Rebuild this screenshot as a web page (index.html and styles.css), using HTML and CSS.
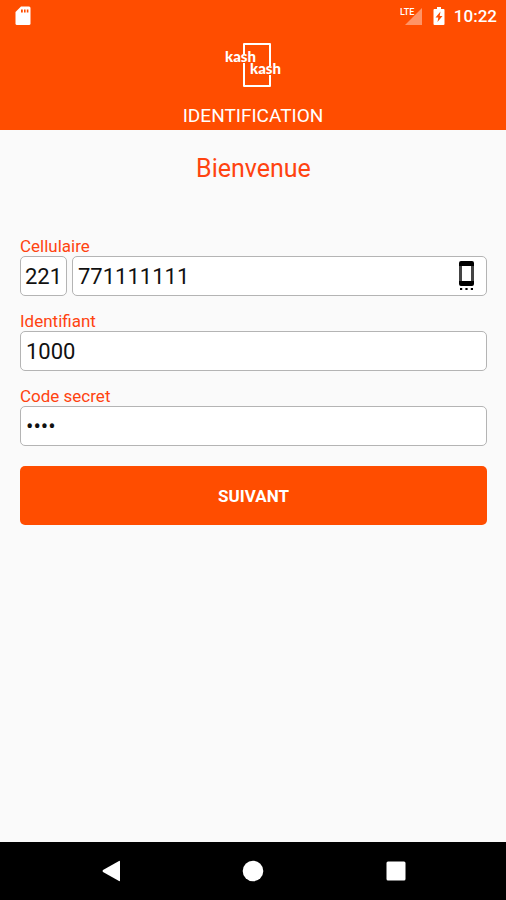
FILE: index.html
```html
<!DOCTYPE html>
<html lang="fr">
<head>
<meta charset="utf-8">
<meta name="viewport" content="width=device-width, initial-scale=1">
<title>Identification</title>
<link rel="stylesheet" href="styles.css">
</head>
<body>
<header class="header">
  <div class="status">
    <svg class="sd" width="16" height="20" viewBox="0 0 16 20" aria-hidden="true"><path class="white" d="M6 0.500H14Q15.500 0.500 15.500 2V17.500Q15.500 19 14 19H2Q0.500 19 0.500 17.500V6Z"/><path class="cut" d="M6 3.500h1.800v3H6zM9 3.500h1.600v3H9zM11.800 3.500h1.600v3h-1.600z"/></svg>
    <div class="status-right">
      <svg width="24" height="20" viewBox="0 0 24 20" role="img" aria-label="LTE"><path class="signal" d="M22 2V19H5Z"/><text class="lte" x="0" y="9">LTE</text></svg>
      <svg width="12" height="20" viewBox="0 0 12 20" aria-hidden="true"><path class="white" d="M4 1H8V3H10.500Q11.500 3 11.500 4V18Q11.500 19 10.500 19H1.500Q0.500 19 0.500 18V4Q0.500 3 1.500 3H4Z"/><path class="bolt" d="M7.500 5.500L2.500 11.500H5.300L4.500 16L9.500 10H6.700Z"/></svg>
      <time class="clock">10:22</time>
    </div>
  </div>
  <svg class="logo" width="60" height="46" viewBox="0 0 60 46" role="img" aria-label="kash kash">
    <path class="frame" d="M21 13V2H47V24M21 21V44H47V33"/>
    <text class="brand" x="2" y="20">kash</text>
    <text class="brand" x="27" y="32">kash</text>
  </svg>
  <h1 class="title">IDENTIFICATION</h1>
</header>
<main class="main">
  <h2 class="welcome">Bienvenue</h2>
  <form class="form">
    <div class="field">
      <label for="phone">Cellulaire</label>
      <div class="phone-row">
        <input class="box prefix" type="text" value="221" aria-label="Indicatif">
        <div class="box phone">
          <input class="phone-input" id="phone" type="tel" value="771111111">
          <svg width="18" height="32" viewBox="0 0 18 32" aria-hidden="true"><path class="phone-side" d="M2.500 5V23M14.500 5V23"/><path d="M3 1H14Q16 1 16 3V6H1V3Q1 1 3 1ZM1 21H16V24Q16 26 14 26H3Q1 26 1 24Z"/><path d="M2 28h2.200v2H2zM7.400 28h2.200v2H7.400zM12.800 28H15v2h-2.200z"/></svg>
        </div>
      </div>
    </div>
    <div class="field">
      <label for="ident">Identifiant</label>
      <input class="box" id="ident" type="text" value="1000">
    </div>
    <div class="field">
      <label for="secret">Code secret</label>
      <input class="box secret" id="secret" type="password" value="1234">
    </div>
    <button class="submit" type="button">SUIVANT</button>
  </form>
</main>
<nav class="nav" aria-label="Navigation">
  <button type="button" aria-label="Retour"><svg width="22" height="22" viewBox="0 0 22 22"><path d="M21 1.500V20.500Q21 21.500 20 21L4 12Q3 11 4 10L20 1Q21 0.500 21 1.500Z"/></svg></button>
  <button type="button" aria-label="Accueil"><svg width="22" height="22" viewBox="0 0 22 22"><circle cx="11" cy="11" r="10.300"/></svg></button>
  <button type="button" aria-label="Applications"><svg width="22" height="22" viewBox="0 0 22 22"><rect x="1.500" y="1.500" width="19" height="19" rx="1.500"/></svg></button>
</nav>
</body>
</html>
```

FILE: styles.css
```css
* {
  box-sizing: border-box;
}

body {
  margin: 0;
  min-height: 100vh;
  display: flex;
  flex-direction: column;
  background: #fafafa;
  font-family: Roboto, "Liberation Sans", sans-serif;
}

.header {
  background: #ff4d00;
  color: #fff;
  display: flex;
  flex-direction: column;
  align-items: center;
}

.status {
  align-self: stretch;
  height: 32px;
  padding: 0 9px 0 15px;
  display: flex;
  align-items: center;
  justify-content: space-between;
}

.status-right {
  display: flex;
  align-items: center;
  gap: 9px;
}

.white {
  fill: #fff;
}

.cut,
.bolt {
  fill: #ff4d00;
}

.signal {
  fill: #ff9466;
}

.lte {
  fill: #fff;
  font-size: 9px;
  font-weight: 500;
}

.clock {
  font-size: 17px;
  line-height: 20px;
  font-weight: 500;
}

.logo {
  margin-top: 10px;
}

.frame {
  fill: none;
  stroke: #fff;
  stroke-width: 2;
  stroke-linejoin: round;
}

.brand {
  fill: #fff;
  font-family: Lato, sans-serif;
  font-size: 15px;
  font-weight: 900;
}

.title {
  margin: 16px 0 3px;
  font-size: 19px;
  line-height: 23px;
  font-weight: 400;
}

.main {
  flex: 1;
  padding: 25px 19px 20px 20px;
}

.welcome {
  margin: 0 0 53px;
  text-align: center;
  color: #ff4310;
  font-size: 25px;
  line-height: 28px;
  font-weight: 400;
}

.field {
  margin-bottom: 15px;
}

.field label {
  display: block;
  color: #ff4310;
  font-size: 17px;
  line-height: 20px;
}

.box {
  display: block;
  width: 100%;
  height: 40px;
  padding: 0 5px;
  border: 1px solid #b4b4b4;
  border-radius: 5px;
  background: #fff;
  color: #111;
  font-family: inherit;
  font-size: 22px;
}

.phone-row {
  display: flex;
  gap: 5px;
}

.prefix {
  width: 47px;
  padding: 0 4px;
}

.phone {
  flex: 1;
  display: flex;
  align-items: center;
  justify-content: space-between;
  padding-right: 10px;
}

.phone-input {
  flex: 1;
  min-width: 0;
  padding: 0;
  border: 0;
  background: none;
  color: inherit;
  font: inherit;
}

.phone-side {
  fill: none;
  stroke: #444;
  stroke-width: 3;
}

.submit {
  display: block;
  width: 100%;
  height: 59px;
  margin-top: 20px;
  border: 0;
  border-radius: 5px;
  background: #ff4d00;
  color: #fff;
  font-family: inherit;
  font-size: 17px;
  font-weight: 700;
}

.nav {
  height: 58px;
  padding: 0 39px;
  background: #000;
  display: grid;
  grid-template-columns: repeat(3, 1fr);
}

.nav button {
  display: grid;
  place-items: center;
  padding: 0;
  border: 0;
  background: none;
}

.nav svg {
  fill: #fff;
}
```
